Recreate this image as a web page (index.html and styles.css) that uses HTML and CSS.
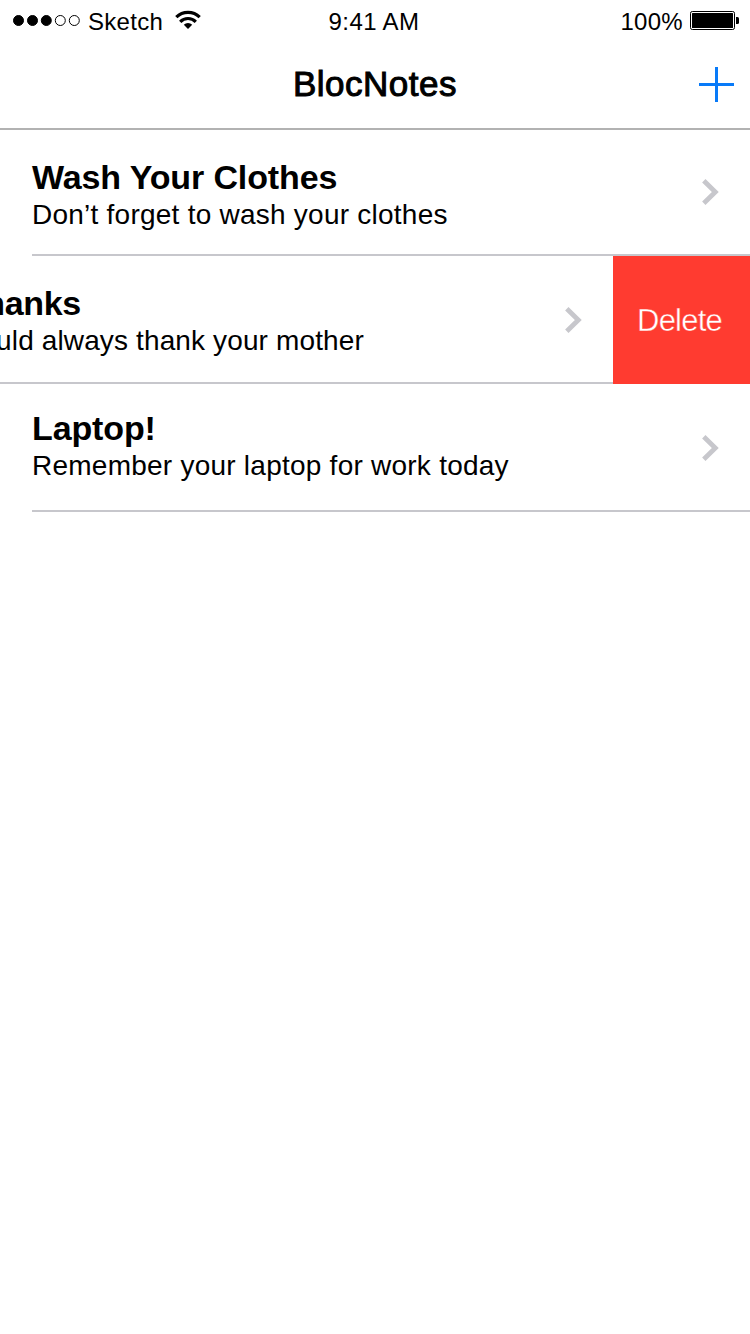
FILE: index.html
```
<!DOCTYPE html>
<html lang="en">
<head>
<meta charset="utf-8">
<title>BlocNotes</title>
<link rel="stylesheet" href="styles.css">
</head>
<body>
<div class="screen">
  <header class="header">
    <div class="status">
      <div class="carrier">
        <svg class="signal" width="69" height="13" viewBox="0 0 69 13"><g stroke="#000"><circle cx="6.5" cy="6.5" r="5"/><circle cx="20.5" cy="6.5" r="5"/><circle cx="34.3" cy="6.5" r="5"/><g fill="none"><circle cx="48.3" cy="6.5" r="5"/><circle cx="62.3" cy="6.5" r="5"/></g></g></svg>
        <span class="carrier-name">Sketch</span>
        <svg class="wifi" width="26" height="19" viewBox="0 0 26 19"><g fill="none" stroke="#000" stroke-width="3.200"><path d="M1.300 7.200A16.600 16.600 0 0 1 24.700 7.200"/><path d="M5.200 11.800A10.900 10.900 0 0 1 20.800 11.800"/></g><path d="M13 19L8.800 14.800A6 6 0 0 1 17.200 14.800Z"/></svg>
      </div>
      <time class="clock">9:41 AM</time>
      <div class="power">
        <span class="percent">100%</span>
        <svg class="battery" width="49" height="19" viewBox="0 0 49 19"><rect x=".5" y=".5" width="44" height="18" rx="1.8" fill="none" stroke="#000"/><rect x="2" y="2" width="41" height="15" rx=".5"/><path d="M46 6h1.500q1.500 0 1.500 1.500v4q0 1.500-1.500 1.500H46z"/></svg>
      </div>
    </div>
    <div class="navbar">
      <h1 class="heading">BlocNotes</h1>
      <button class="add" aria-label="Add note"><svg width="35" height="35" viewBox="0 0 35 35"><path d="M0 17.500H35M17.500 0V35" stroke="#087af8" stroke-width="3"/></svg></button>
    </div>
  </header>
  <main class="notes">
    <article class="note note-first">
      <div class="note-body">
        <div class="note-text"><h2 class="note-title">Wash Your Clothes</h2><p class="note-sub">Don’t forget to wash your clothes</p></div>
        <svg class="chevron" width="17" height="26" viewBox="0 0 17 26"><path d="M1.800 1.800L13.300 13L1.800 24.200" fill="none" stroke="#c7c7cc" stroke-width="4.800"/></svg>
      </div>
    </article>
    <article class="note note-open">
      <div class="note-body">
        <div class="note-text"><h2 class="note-title">Say Thanks</h2><p class="note-sub">You should always thank your mother</p></div>
        <svg class="chevron" width="17" height="26" viewBox="0 0 17 26"><path d="M1.800 1.800L13.300 13L1.800 24.200" fill="none" stroke="#c7c7cc" stroke-width="4.800"/></svg>
      </div>
      <button class="delete">Delete</button>
    </article>
    <article class="note note-last">
      <div class="note-body">
        <div class="note-text"><h2 class="note-title">Laptop!</h2><p class="note-sub">Remember your laptop for work today</p></div>
        <svg class="chevron" width="17" height="26" viewBox="0 0 17 26"><path d="M1.800 1.800L13.300 13L1.800 24.200" fill="none" stroke="#c7c7cc" stroke-width="4.800"/></svg>
      </div>
    </article>
  </main>
</div>
</body>
</html>
```
FILE: styles.css
```
* { box-sizing: border-box; }
body, h1, h2, p { margin: 0; }
body { background: #fff; color: #000; font-family: "Liberation Sans", Arial, sans-serif; }
button { border: 0; padding: 0; background: none; font-family: inherit; }
svg { display: block; flex: none; }
.screen { width: 750px; height: 1334px; overflow: hidden; }
.header { height: 130px; border-bottom: 2px solid #b2b2b2; }
.status { height: 40px; display: grid; grid-template-columns: 1fr auto 1fr; font-size: 24px; line-height: 28px; padding: 8px 11px 0 9px; white-space: nowrap; }
.carrier, .power { display: flex; align-items: flex-start; }
.carrier { padding-left: 3px; }
.power { justify-content: flex-end; }
.signal { margin-top: 6px; }
.carrier-name { width: 75px; margin-left: 7px; letter-spacing: .3px; }
.wifi { margin: 2px 0 0 12px; }
.clock { letter-spacing: .4px; }
.percent { margin-right: 7px; letter-spacing: .3px; }
.battery { margin-top: 3px; }
.navbar { height: 88px; display: grid; grid-template-columns: 1fr auto 1fr; align-items: start; padding: 24px 16px 0; }
.heading { grid-column: 2; font-size: 35px; line-height: 40px; font-weight: 400; letter-spacing: .5px; -webkit-text-stroke: 1px #000; }
.add { justify-self: end; margin-top: 3px; }
.note { height: 128px; display: flex; }
.note-first { height: 126px; }
.note-body { flex: none; width: 718px; margin-left: 32px; border-bottom: 2px solid #c7c7cc; display: flex; justify-content: space-between; align-items: flex-start; padding: 28px 31px 0 0; white-space: nowrap; }
.note-open .note-body { margin-left: -105px; }
.note-open .note-title { letter-spacing: -.3px; }
.note-open .note-sub { letter-spacing: .13px; }
.note-last .note-body { padding-top: 25px; }
.note-title { font-size: 34px; line-height: 39px; font-weight: 700; letter-spacing: -.12px; }
.note-sub { padding-top: 2px; font-size: 28px; line-height: 32px; letter-spacing: .24px; }
.chevron { margin-top: 23px; }
.note-first .chevron { margin-top: 21px; }
.note-last .chevron { margin-top: 26px; }
.delete { flex: none; width: 137px; background: #ff3b30; color: #fff; font-size: 31px; line-height: 36px; letter-spacing: -.8px; padding: 2px 4px 0 0; -webkit-text-stroke: .4px #ff3b30; }
```
